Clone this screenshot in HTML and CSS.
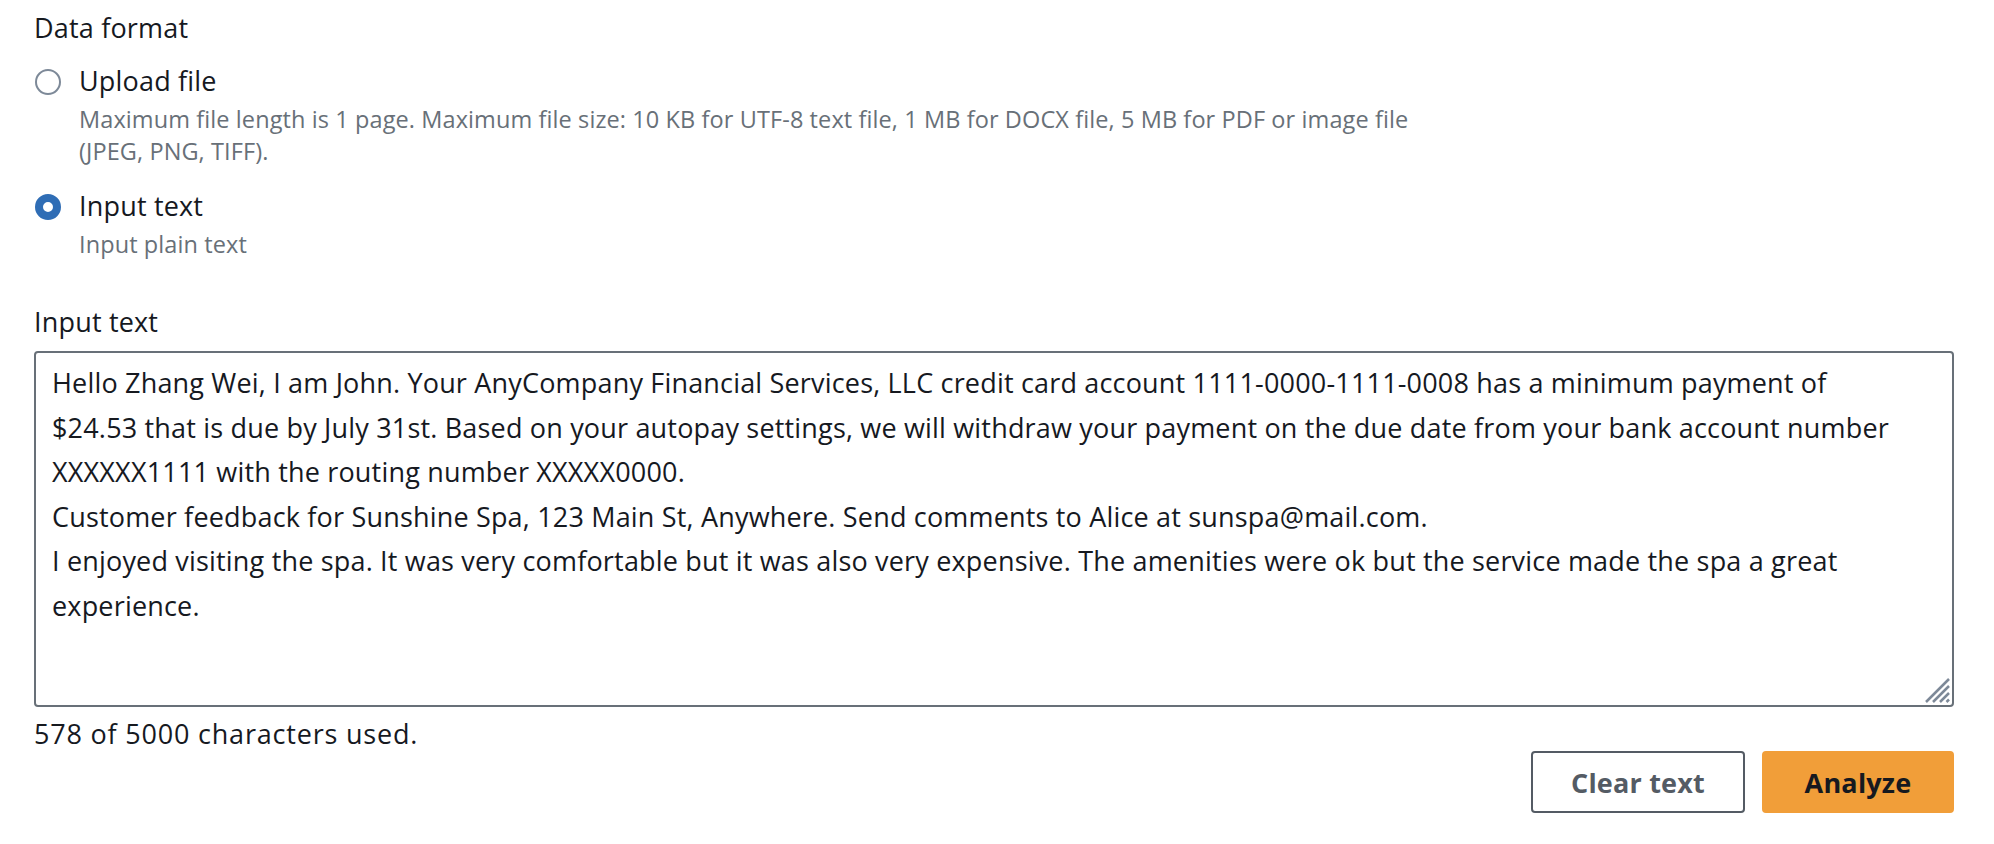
FILE: index.html
```html
<!DOCTYPE html>
<html lang="en">
<head>
<meta charset="utf-8">
<title>Input text</title>
<link rel="stylesheet" href="styles.css">
</head>
<body>
<main class="form">
  <section class="field">
    <div class="field-label">Data format</div>
    <div class="radio-group">
      <div class="radio">
        <span class="radio-ctrl"></span>
        <div class="radio-body">
          <div class="radio-label">Upload file</div>
          <div class="radio-desc">
            <span class="desc-line">Maximum file length is 1 page. Maximum file size: 10 KB for UTF-8 text file, 1 MB for DOCX file, 5 MB for PDF or image file</span>
            <span class="desc-line">(JPEG, PNG, TIFF).</span>
          </div>
        </div>
      </div>
      <div class="radio radio-checked">
        <span class="radio-ctrl"></span>
        <div class="radio-body">
          <div class="radio-label">Input text</div>
          <div class="radio-desc">
            <span class="desc-line">Input plain text</span>
          </div>
        </div>
      </div>
    </div>
  </section>

  <section class="field field-text">
    <div class="field-label">Input text</div>
    <div class="textarea">
      <span class="ta-line">Hello Zhang Wei, I am John. Your AnyCompany Financial Services, LLC credit card account 1111-0000-1111-0008 has a minimum payment of</span>
      <span class="ta-line">$24.53 that is due by July 31st. Based on your autopay settings, we will withdraw your payment on the due date from your bank account number</span>
      <span class="ta-line">XXXXXX1111 with the routing number XXXXX0000.</span>
      <span class="ta-line">Customer feedback for Sunshine Spa, 123 Main St, Anywhere. Send comments to Alice at sunspa@mail.com.</span>
      <span class="ta-line">I enjoyed visiting the spa. It was very comfortable but it was also very expensive. The amenities were ok but the service made the spa a great</span>
      <span class="ta-line">experience.</span>
      <svg class="resize" width="28" height="28" viewBox="0 0 28 28" aria-hidden="true">
        <line x1="3" y1="26" x2="26" y2="3"/>
        <line x1="10" y1="26" x2="26" y2="10"/>
        <line x1="17" y1="26" x2="26" y2="17"/>
        <line x1="23.5" y1="26" x2="26" y2="23.5"/>
      </svg>
    </div>
    <div class="counter">578 of 5000 characters used.</div>
  </section>

  <div class="actions">
    <button class="btn btn-normal" type="button">Clear text</button>
    <button class="btn btn-primary" type="button">Analyze</button>
  </div>
</main>
</body>
</html>
```

FILE: styles.css
```css
* {
  box-sizing: border-box;
}

html,
body {
  margin: 0;
  background: #ffffff;
}

body {
  font-family: "Open Sans", "Liberation Sans", Arial, sans-serif;
  color: #16191f;
  font-size: 27px;
  line-height: 44px;
  letter-spacing: 0.18px;
}

.form {
  padding: 6px 40px 0 34px;
}

.field-label {
  line-height: 44px;
  color: #16191f;
}

.radio-group {
  margin-top: 9px;
  display: flex;
  flex-direction: column;
  gap: 17px;
}

.radio {
  display: flex;
  align-items: flex-start;
  gap: 18px;
}

.radio-ctrl {
  flex: none;
  width: 26px;
  height: 26px;
  margin-top: 10px;
  margin-left: 1px;
  border-radius: 50%;
  border: 2px solid #7d8998;
  background: #ffffff;
}

.radio-checked .radio-ctrl {
  border: 8px solid #2f6db5;
}

.radio-label {
  line-height: 44px;
}

.radio-desc {
  font-size: 23.5px;
  line-height: 32px;
  letter-spacing: 0.1px;
  color: #687078;
}

.desc-line {
  display: block;
  white-space: nowrap;
}

.field-text {
  margin-top: 40px;
}

.textarea {
  position: relative;
  margin-top: 7px;
  height: 356px;
  border: 2px solid #687078;
  border-radius: 4px;
  padding: 8px 16px;
  background: #ffffff;
  color: #16191f;
}

.ta-line {
  display: block;
  white-space: nowrap;
  line-height: 44.5px;
}

.resize {
  position: absolute;
  right: 1px;
  bottom: 1px;
}

.resize line {
  stroke: #7d8998;
  stroke-width: 2.5;
}

.counter {
  margin-top: 11px;
  line-height: 32px;
  letter-spacing: 0.8px;
}

.actions {
  margin-top: 1px;
  display: flex;
  justify-content: flex-end;
  gap: 17px;
}

.btn {
  height: 62px;
  border-radius: 4px;
  font-family: inherit;
  font-size: 27px;
  font-weight: 700;
  letter-spacing: 0.2px;
  padding: 0;
  text-align: center;
  cursor: pointer;
}

.btn-normal {
  width: 214px;
  background: #ffffff;
  border: 2px solid #545b64;
  color: #545b64;
}

.btn-primary {
  width: 192px;
  background: #f19e39;
  border: 2px solid #f19e39;
  color: #16191f;
}
```
